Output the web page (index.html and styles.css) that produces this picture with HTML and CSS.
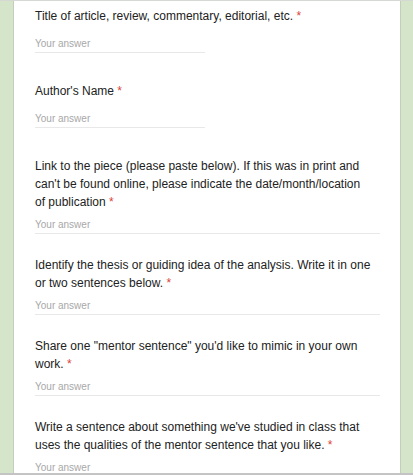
FILE: index.html
```html
<!DOCTYPE html>
<html>
<head>
<meta charset="utf-8">
<link rel="stylesheet" href="styles.css">
</head>
<body>
<div class="page">
  <div class="card">
    <div class="item short">
      <div class="q">Title of article, review, commentary, editorial, etc. <span class="req">*</span></div>
      <div class="answer half">Your answer</div>
    </div>
    <div class="item short">
      <div class="q">Author's Name <span class="req">*</span></div>
      <div class="answer half">Your answer</div>
    </div>
    <div class="item">
      <div class="q">Link to the piece (please paste below). If this was in print and can't be found online, please indicate the date/month/location of&nbsp;publication <span class="req">*</span></div>
      <div class="answer">Your answer</div>
    </div>
    <div class="item">
      <div class="q">Identify the thesis or guiding idea of the analysis. Write it in one or two sentences below. <span class="req">*</span></div>
      <div class="answer">Your answer</div>
    </div>
    <div class="item">
      <div class="q">Share one "mentor sentence" you'd like to mimic in your own work. <span class="req">*</span></div>
      <div class="answer">Your answer</div>
    </div>
    <div class="item">
      <div class="q">Write a sentence about something we've studied in class that uses the qualities of the mentor sentence that you like. <span class="req">*</span></div>
      <div class="answer">Your answer</div>
    </div>
  </div>
</div>
</body>
</html>
```

FILE: styles.css
```css
html, body {
  margin: 0;
  padding: 0;
  height: 100%;
  overflow: hidden;
}
body {
  background: #d4e5c9;
  font-family: "Liberation Sans", Arial, sans-serif;
  color: #222;
}
.page {
  height: 475px;
  box-sizing: border-box;
  border-top: 1px solid #d6d9d3;
  border-bottom: 2px solid #c4c4c4;
  overflow: hidden;
  padding-left: 13px;
  padding-right: 12px;
}
.card {
  background: #fff;
  border-left: 1px solid #c3cfbc;
  border-right: 1px solid #c3cfbc;
  height: 100%;
  box-sizing: border-box;
  padding: 6px 20px 0 21px;
}
.item {
  padding-bottom: 22px;
}
.item.short {
  padding-bottom: 29px;
}
.q {
  font-size: 12px;
  line-height: 18px;
  padding-right: 6px;
}
.req {
  color: #db4437;
}
.answer {
  margin-top: 7px;
  font-size: 10px;
  line-height: 14px;
  color: #a8a8a8;
  padding-bottom: 1px;
  border-bottom: 1px solid #e8e8e8;
}
.short .answer {
  margin-top: 12px;
}
.answer.half {
  width: 170px;
}
```
